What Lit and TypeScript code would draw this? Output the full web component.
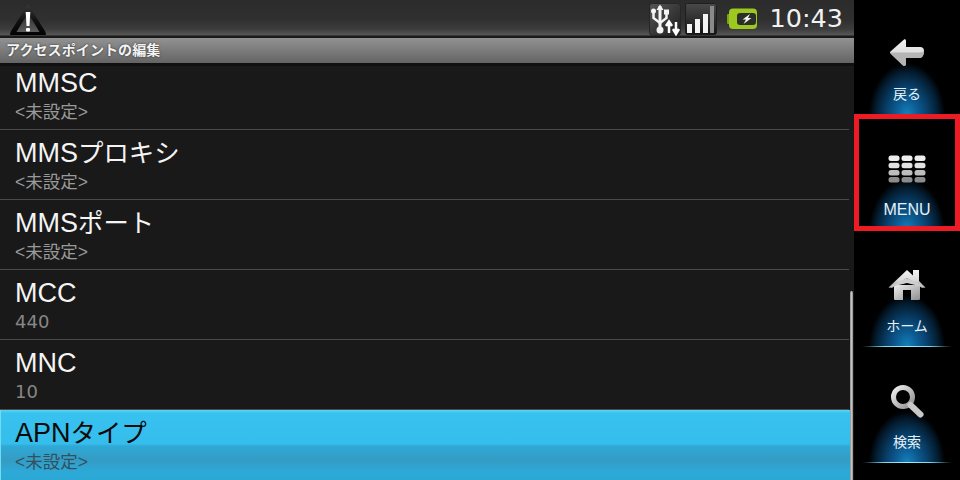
import { LitElement, html, css, svg } from "lit";
import { customElement } from "lit/decorators.js";

const rows = [
  { a: "MMSC", k: "", s: "<未設定>" },
  { a: "MMS", k: "プロキシ", s: "<未設定>" },
  { a: "MMS", k: "ポート", s: "<未設定>" },
  { a: "MCC", k: "", s: "440", num: true },
  { a: "MNC", k: "", s: "10", num: true },
  { a: "APN", k: "タイプ", s: "<未設定>", sel: true },
];

const defs = svg`<defs>
  <linearGradient id="metal" x1="0" y1="0" x2="0" y2="1">
    <stop offset="0" stop-color="#f4f4f4"/><stop offset=".55" stop-color="#dcdcdc"/><stop offset="1" stop-color="#9c9c9c"/>
  </linearGradient>
  <linearGradient id="metal2" x1="0" y1="0" x2="1" y2="1">
    <stop offset="0" stop-color="#eee"/><stop offset="1" stop-color="#8f8f8f"/>
  </linearGradient>
  <linearGradient id="warn" x1="0" y1="0" x2="0" y2="1">
    <stop offset="0" stop-color="#3a3a3a"/><stop offset=".55" stop-color="#101010"/><stop offset="1" stop-color="#020202"/>
  </linearGradient>
  <linearGradient id="warnin" x1="0" y1="0" x2="0" y2="1">
    <stop offset="0" stop-color="#2a2a2a"/><stop offset="1" stop-color="#5c5c5c"/>
  </linearGradient>
  <linearGradient id="usbbox" x1="0" y1="0" x2="1" y2="1">
    <stop offset="0" stop-color="#555"/><stop offset="1" stop-color="#1e1e1e"/>
  </linearGradient>
  <linearGradient id="sigbox" x1="0" y1="0" x2="0" y2="1">
    <stop offset="0" stop-color="#4a4a4a"/><stop offset="1" stop-color="#141414"/>
  </linearGradient>
</defs>`;

const back = html`<svg width="36" height="30" viewBox="0 0 36 30">${defs}
  <path d="M15 1.500 C16 1 17 1.500 17 3 L17 9 L31 9 Q35 9 35 13 Q35 19 31 20 L17 20 L17 26 C17 28 15 28.500 14 27.500 L2 16 Q0 14.500 2 13 Z" fill="url(#metal)"/>
  <path d="M2 14.500 L31 14.500 Q35 14 35 12 Q35 19 31 20 L17 20 L17 26 C17 28 15 28.500 14 27.500 L2 16Z" fill="#b4b4b4"/>
</svg>`;

const menu = html`<svg width="38" height="28" viewBox="0 0 38 28">
  ${[0, 1, 2, 3].flatMap((r) =>
    [0, 1, 2].map(
      (c) => svg`<rect x=${c * 13 + 0.5} y=${r * 7.2 + 0.5} width="11" height="5.500" rx="2.500" fill=${["#eeeeee", "#e2e2e2", "#bdbdbd", "#8c8c8c"][r]}/>`
    )
  )}
</svg>`;

const home = html`<svg width="38" height="32" viewBox="0 0 38 32">${defs}
  <path d="M6 16 H32 V30 Q32 31 31 31 H23 V21 H15 V31 H7 Q6 31 6 30Z" fill="url(#metal2)"/>
  <path d="M0.500 18.500 L19 1 L25 6.500 V1 H31 V12 L37.500 18.500 L34 19 L19 9 L4 19Z" fill="url(#metal)"/>
  <path d="M0.500 18.500 L19 9 L37.500 18.500 L19 14Z" fill="#cfcfcf"/>
</svg>`;

const search = html`<svg width="34" height="34" viewBox="0 0 34 34">${defs}
  <circle cx="13" cy="13" r="9.500" fill="none" stroke="url(#metal2)" stroke-width="5"/>
  <path d="M20.500 21 L30.500 30.500" stroke="#c9c9c9" stroke-width="6" stroke-linecap="round"/>
</svg>`;

const warning = html`<svg width="36" height="31" viewBox="0 0 36 31">${defs}
  <path d="M18 0 L35.500 28 L36 31 H0 L.5 28Z" fill="url(#warn)"/>
  <path d="M18 9 L29.500 28 H6.500Z" fill="url(#warnin)"/>
  <path d="M15.700 8 H20.300 L19.500 22 H16.500Z" fill="#fff"/>
  <rect x="16" y="24" width="4" height="3.500" rx="1" fill="#fff"/>
</svg>`;

const usb = html`<svg width="32" height="33" viewBox="0 0 32 33">${defs}
  <rect x=".5" y=".5" width="31" height="32" rx="3" fill="url(#usbbox)" stroke="#262626"/>
  <path d="M11 3 V26" stroke="#f4f4f4" stroke-width="3"/>
  <path d="M11 1.500 L14.500 7 H7.500Z" fill="#f4f4f4"/>
  <circle cx="11" cy="27" r="3.500" fill="#f4f4f4"/>
  <path d="M4.500 9 V15 L11 20 M17.500 10 V15 L11 20" stroke="#f4f4f4" stroke-width="2.500" fill="none"/>
  <circle cx="4.500" cy="8" r="2.500" fill="#f4f4f4"/>
  <rect x="15" y="6.500" width="5" height="5" fill="#f4f4f4"/>
  <path d="M20 30 V20 M17 23 L20 18.500 L23 23" stroke="#fff" stroke-width="2.500" fill="none"/>
  <path d="M27 19 V29 M24 26 L27 31 L30 26" stroke="#fff" stroke-width="2.500" fill="none"/>
</svg>`;

const signal = html`<svg width="32" height="33" viewBox="0 0 32 33">${defs}
  <rect x=".5" y=".5" width="31" height="31" rx="2" fill="url(#sigbox)" stroke="#1e1e1e"/>
  <rect x="2" y="21" width="5" height="9" fill="#f4f4f4"/>
  <rect x="10" y="16" width="5" height="14" fill="#f4f4f4"/>
  <rect x="18" y="11" width="5" height="19" fill="#f4f4f4"/>
  <rect x="25" y="3" width="4" height="27" fill="#8a8a8a"/>
</svg>`;

const battery = html`<svg width="31" height="22" viewBox="0 0 31 22">
  <rect x="0" y="6" width="3" height="10" rx="1" fill="#7aa31c"/>
  <rect x="2" y="0.500" width="28" height="20.500" rx="4" fill="#9cc820"/>
  <rect x="10" y="5" width="19" height="12" rx="3" fill="#2b2f26"/>
  <path d="M23 6 L15.500 11.500 H19 L16.500 16 L24.500 10 H21Z" fill="#f4f4f4"/>
</svg>`;

const nav = [
  { label: "戻る", icon: back },
  { label: "MENU", icon: menu },
  { label: "ホーム", icon: home },
  { label: "検索", icon: search },
];

@customElement("app-root")
export class AppRoot extends LitElement {
  static styles = css`
    :host {
      display: block;
      width: 960px;
      height: 480px;
      overflow: hidden;
      background: #000;
      font-family: "Liberation Sans", "Noto Sans CJK JP", sans-serif;
    }
    .screen { display: flex; width: 960px; height: 480px; }
    .main { width: 854px; height: 480px; display: flex; flex-direction: column; background: #191919; position: relative; overflow: hidden; flex: none; }
    .status {
      height: 38px; flex: none; box-sizing: border-box;
      display: flex; align-items: flex-start; padding: 3px 11px 0 10px;
      background: linear-gradient(#2b2b2b 0, #303030 20px, #3c3c3c 29px, #565656 35px, #1a1a1a 36px, #1a1a1a 38px);
    }
    .warn { margin-top: 1px; display: block; }
    .warn svg { display: block; }
    .spacer { flex: 1; }
    .tray { display: flex; align-items: flex-start; }
    .tray svg { display: block; }
    .signal { margin-left: 4px; }
    .batt { margin: 5px 0 0 10px; }
    .time { margin-left: 12px; font-family: "DejaVu Sans", sans-serif; font-size: 25.500px; line-height: 31px; color: #f2f2f2; }
    .title {
      height: 25px; flex: none; box-sizing: border-box; padding-left: 6px;
      background: linear-gradient(#929292, #646464);
      color: #f4f4f4; font-size: 14px; letter-spacing: .1px; font-weight: 700; line-height: 24px;
      text-shadow: 0 0 2px #222;
    }
    .list { flex: 1; display: flex; flex-direction: column; border-top: 3px solid #101010; }
    .row { height: 70px; flex: none; box-sizing: border-box; border-bottom: 1px solid #4a4a4a; padding: 7px 0 0 15px; margin-right: 5px; }
    .row:first-child { height: 64px; padding-top: 1px; }
    .t { font-size: 27px; line-height: 32px; color: #f4f4f4; white-space: nowrap; }
    .k { font-size: 25.400px; }
    .s { font-size: 17.500px; line-height: 20px; margin-top: 3px; color: #9a9a9a; white-space: nowrap; }
    .s.num { font-family: "DejaVu Sans", sans-serif; font-size: 18px; color: #878787; }
    .row.sel {
      height: 70px; border-bottom: 0; margin-right: 4px;
      background: linear-gradient(#5fd5f2 0, #38c2f0 3px, #35bdec 34px, #2fa9d6 36px, #349cc4 50px, #2da9d8 62px, #2ba8d4 70px);
      border-left: 1px solid #6fdcf0; padding-left: 14px;
    }
    .sel .t { color: #0a0a0a; }
    .sel .s { color: #33505e; }
    .scroll { position: absolute; right: 1px; top: 291px; width: 3px; height: 189px; background: linear-gradient(90deg, #8a8a8a, #c4c4c4, #8a8a8a); border-radius: 2px 2px 0 0; }
    .nav { width: 106px; flex: none; display: flex; flex-direction: column; position: relative; }
    .cell {
      height: 116px; flex: none; box-sizing: border-box; position: relative;
      display: flex; flex-direction: column; align-items: center;
      background: radial-gradient(ellipse 38px 52px at 50% 100%, #1583bd 0, #0d5d95 28%, #083f69 55%, #041d31 82%, #000 100%);
    }
    .cell:first-child { height: 115px; padding-top: 37px; }
    .cell:not(:first-child) { padding-top: 38px; }
    .cell::after {
      content: ""; position: absolute; left: 8px; right: 8px; bottom: 0; height: 1.500px;
      background: linear-gradient(90deg, transparent, #7fd8ea 25%, #a8ecf6 50%, #7fd8ea 75%, transparent);
    }
    .icon { height: 32px; display: flex; align-items: center; justify-content: center; }
    .icon svg { display: block; }
    .label { margin-top: 15px; font-size: 14px; line-height: 20px; color: #e6f2f8; }
    .cell:nth-child(2) .label { font-size: 16px; margin-top: 15px; }
    .frame { position: absolute; left: 0; right: 0; top: 114px; height: 117px; box-sizing: border-box; border: 5px solid #ed1c24; }
    .foot { flex: 1; }
  `;

  render() {
    return html`<div class="screen">
      <div class="main">
        <div class="status">
          <span class="warn">${warning}</span>
          <span class="spacer"></span>
          <div class="tray">
            ${usb}<span class="signal">${signal}</span><span class="batt">${battery}</span>
            <span class="time">10:43</span>
          </div>
        </div>
        <div class="title">アクセスポイントの編集</div>
        <div class="list">
          ${rows.map(
            (r) => html`<div class="row ${r.sel ? "sel" : ""}">
              <div class="t">${r.a}<span class="k">${r.k}</span></div>
              <div class="s ${r.num ? "num" : ""}">${r.s}</div>
            </div>`
          )}
        </div>
        <div class="scroll"></div>
      </div>
      <div class="nav">
        ${nav.map(
          (n) => html`<div class="cell">
            <div class="icon">${n.icon}</div>
            <div class="label">${n.label}</div>
          </div>`
        )}
        <div class="foot"></div>
        <div class="frame"></div>
      </div>
    </div>`;
  }
}
